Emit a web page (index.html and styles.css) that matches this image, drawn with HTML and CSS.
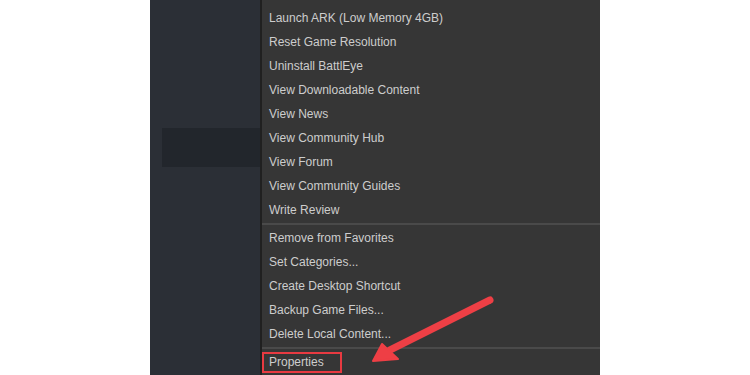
FILE: index.html
```html
<!DOCTYPE html>
<html>
<head>
<meta charset="utf-8">
<link rel="stylesheet" href="styles.css">
</head>
<body>
<div class="stage">
  <div class="gutter"></div>
  <div class="library">
    <div class="selected-row"></div>
  </div>
  <div class="menu">
    <div class="item">Launch ARK (Low Memory 4GB)</div>
    <div class="item">Reset Game Resolution</div>
    <div class="item">Uninstall BattlEye</div>
    <div class="item">View Downloadable Content</div>
    <div class="item">View News</div>
    <div class="item">View Community Hub</div>
    <div class="item">View Forum</div>
    <div class="item">View Community Guides</div>
    <div class="item">Write Review</div>
    <div class="sep"></div>
    <div class="item">Remove from Favorites</div>
    <div class="item">Set Categories...</div>
    <div class="item">Create Desktop Shortcut</div>
    <div class="item">Backup Game Files...</div>
    <div class="item">Delete Local Content...</div>
    <div class="sep"></div>
    <div class="item item-marked"><span class="highlight">Properties</span></div>
  </div>
  <div class="gutter-right"></div>
  <svg class="arrow" width="750" height="375" viewBox="0 0 750 375">
    <line x1="490" y1="300" x2="390" y2="350" stroke="#ee3f45" stroke-width="7" stroke-linecap="round"/>
    <polygon points="373,361 382,344 398,359" fill="#ee3f45" stroke="#ee3f45" stroke-width="2" stroke-linejoin="round"/>
  </svg>
</div>
</body>
</html>
```
FILE: styles.css
```css
html, body {
  margin: 0;
  padding: 0;
  background: #ffffff;
}
.stage {
  position: relative;
  display: flex;
  width: 750px;
  height: 375px;
  overflow: hidden;
  font-family: "Liberation Sans", Arial, sans-serif;
}
.gutter {
  width: 150px;
  flex: none;
}
.library {
  width: 110px;
  flex: none;
  background: #2b2f36;
  padding-top: 128px;
  box-sizing: border-box;
}
.selected-row {
  margin-left: 12px;
  height: 39px;
  background: #22262c;
}
.menu {
  width: 340px;
  flex: none;
  box-sizing: border-box;
  background: #363636;
  border-left: 2px solid #202020;
  padding-top: 6px;
}
.item {
  height: 24px;
  line-height: 24px;
  padding-left: 7px;
  font-size: 12px;
  color: #cdcdcd;
  white-space: nowrap;
}
.sep {
  height: 4px;
  display: flex;
  align-items: center;
}
.sep::before {
  content: "";
  display: block;
  width: 100%;
  height: 2px;
  background: #4a4a4a;
}
.item-marked {
  padding-left: 0;
}
.highlight {
  display: inline-block;
  height: 17px;
  line-height: 17px;
  padding: 0 5px;
  border: 2px solid #e83a41;
  width: 66px;
}
.gutter-right {
  flex: 1;
}
.arrow {
  position: absolute;
  left: 0;
  top: 0;
}
```
